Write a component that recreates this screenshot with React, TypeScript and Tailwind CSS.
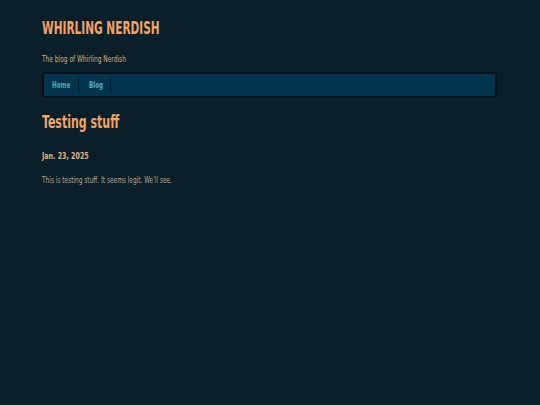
const narrow = "inline-block origin-left whitespace-nowrap";

export default function App() {
  return (
    <div
      className="min-h-[405px] w-full bg-[#0c1f28] px-[42px] pt-[18px]"
      style={{ fontFamily: '"Liberation Sans Narrow", "DejaVu Sans Condensed", "Liberation Sans", sans-serif' }}
    >
      {/* Header */}
      <header>
        <h1 className="text-[17px] font-bold leading-[21px] text-[#eea46e]">
          <span className={`${narrow} scale-x-[0.69]`}>WHIRLING NERDISH</span>
        </h1>
        <p className="mt-[15px] text-[8px] leading-[12px] text-[#c9b08e]">
          <span className={`${narrow} scale-x-[0.82]`}>The blog of Whirling Nerdish</span>
        </p>
      </header>

      {/* Nav */}
      <nav className="mt-[6px] flex h-[26px] w-[455px] items-center rounded-[3px] border-2 border-[#051319] bg-[#02344f] px-[8px]">
        <a className="flex h-[15px] w-[27px] items-center border-r border-[#061a24] pt-[2px] text-[8px] font-bold text-[#58a9bd]">
          <span className={`${narrow} scale-x-[0.78]`}>Home</span>
        </a>
        <a className="flex h-[15px] w-[32px] items-center border-r border-[#061a24] pl-[10px] pt-[2px] text-[8px] font-bold text-[#58a9bd]">
          <span className={`${narrow} scale-x-[0.78]`}>Blog</span>
        </a>
      </nav>

      {/* Post */}
      <main className="mt-[13px]">
        <h2 className="text-[17px] font-bold leading-[22px] text-[#eea46e]">
          <span className={`${narrow} scale-x-[0.72]`}>Testing stuff</span>
        </h2>
        <p className="mt-[17px] text-[9px] font-bold leading-[12px] text-[#dcb48a]">
          <span className={`${narrow} scale-x-[0.78]`}>Jan. 23, 2025</span>
        </p>
        <p className="mt-[13px] text-[8px] leading-[12px] text-[#b5a58e]">
          <span className={`${narrow} scale-x-[0.81]`}>This is testing stuff. It seems legit. We'll see.</span>
        </p>
      </main>
    </div>
  );
}
